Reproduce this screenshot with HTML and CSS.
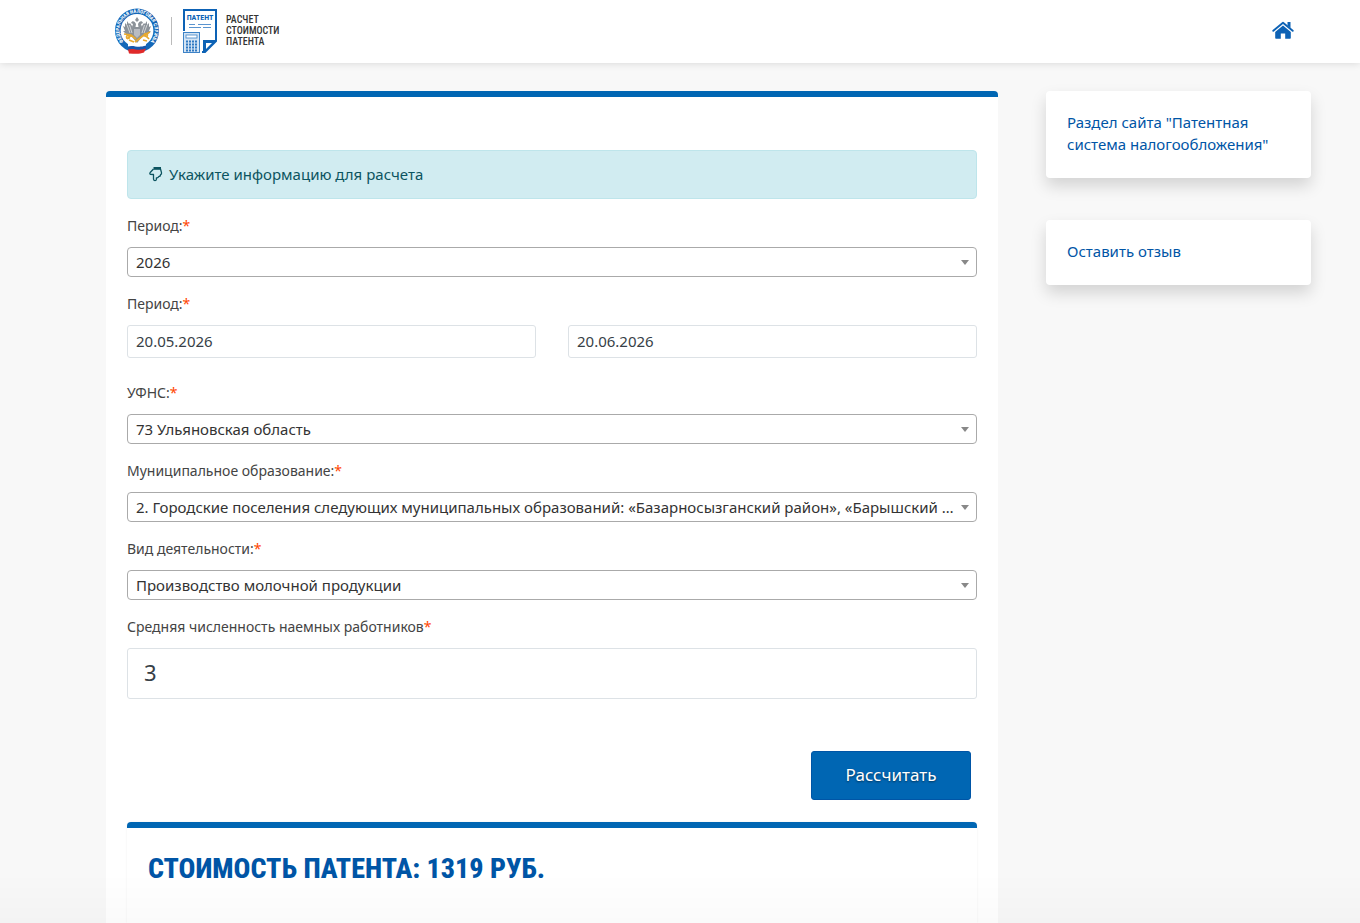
FILE: index.html
```
<!DOCTYPE html>
<html lang="ru">
  <head>
    <meta charset="UTF-8" />
    <meta name="viewport" content="width=device-width, initial-scale=1.0" />
    <title>Расчет стоимости патента</title>
    <link rel="stylesheet" href="styles.css">
  </head>
  <body>
    <header class="header">
      <a class="logo" href="#">
        <svg class="emblem" viewBox="0 0 46 48" width="46" height="48" aria-hidden="true">
          <defs>
            <path id="ring" d="M12.700 37.700 A17.600 17.600 0 1 1 33.300 37.700" />
          </defs>
          <circle cx="23" cy="23.5" r="22" fill="#1467b8" />
          <circle cx="23" cy="23.5" r="16.400" fill="#fff" />
          <text class="emblem-text"><textPath href="#ring" startOffset="50%" text-anchor="middle">ФЕДЕРАЛЬНАЯ НАЛОГОВАЯ СЛУЖБА</textPath></text>
          <!-- орел -->
          <g fill="#8c9299">
            <path d="M21 13l2-3 2 3-2 2z" />
            <path d="M22 17c-1-3-4-4-5-1l2 1-1 3 3 3zM24 17c1-3 4-4 5-1l-2 1 1 3-3 3z" />
            <path d="M20 22l-4-6-1 1-2-3 0 4-2-2 0 4-2-1 2 5-2 0 3 3 6 3 3-1zM26 22l4-6 1 1 2-3 0 4 2-2 0 4 2-1-2 5 2 0-3 3-6 3-3-1z" />
            <path d="M19 20h8l1 10-5 6-5-6z" />
          </g>
          <g fill="none" stroke="#fff" stroke-width="0.6">
            <path d="M13 18l3 8M15.500 18l2.500 8M33 18l-3 8M30.500 18l-2.500 8" />
          </g>
          <path d="M20 22h6v6l-3 3-3-3z" fill="#b9bcc2" />
          <g fill="none" stroke="#e8a92f" stroke-width="1.700">
            <path d="M10 27l7 1 5 4M17 28l-4 4M36 25l-6 3-9 7M30 27l5 5M15 33l5 2M29 33l4 1" />
            <circle cx="14" cy="30" r="1.500" />
            <circle cx="32" cy="28" r="1.500" />
          </g>
          <!-- лента -->
          <path d="M14 37c6-2 9 2 18-1v3c-9 3-12-1-18 1z" fill="#fff" />
          <path d="M14 39.500c6-2 9 2 18-1v3.500c-9 3-12-1-18 1z" fill="#1757ac" />
          <path d="M14 42.500c6-2 9 2 18-1l-2 4c-5 2-10 1-15 1z" fill="#e02a2a" />
        </svg>
        <span class="logo-line"></span>
        <svg class="patent" viewBox="0 0 34 44" width="34" height="44" aria-hidden="true">
          <path d="M1 22V1h32v31L22 43h-3" fill="none" stroke="#0d62b5" stroke-width="2" />
          <path d="M20 44V31h14L21 44z" fill="#0d62b5" />
          <path d="M23 40v-6h6z" fill="#fff" />
          <text class="patent-text" x="17" y="11" text-anchor="middle">ПАТЕНТ</text>
          <path d="M6 15.500h6M15 15.500h13M6 18.500h12M20 18.500h8" stroke="#5a94cf" stroke-width="1.200" />
          <rect x="0.500" y="23.500" width="16" height="20" fill="#d4e4f4" stroke="#3e83c7" />
          <rect x="3" y="26" width="11" height="3" fill="#fff" stroke="#3e83c7" stroke-width="0.800" />
          <path d="M3 32.500h11M3 35.500h11M3 38.500h11M3 41.500h11" stroke="#2f79c2" stroke-width="1.800" stroke-dasharray="2 1" />
        </svg>
        <span class="logo-text">РАСЧЕТ<br>СТОИМОСТИ<br>ПАТЕНТА</span>
      </a>
      <a class="home" href="#" aria-label="На главную">
        <svg viewBox="0 0 22 18" width="22" height="18" aria-hidden="true">
          <path d="M11 4.500L3.200 11v6q0 .8.800.8h4.800V12.500h4.400v5.300H18q.8 0 .8-.8v-6z" fill="#0d62b5" />
          <path d="M1.300 9.800L11 1.800l9.700 8" fill="none" stroke="#0d62b5" stroke-width="1.900" stroke-linecap="round" stroke-linejoin="round" />
          <path d="M15.500 1h3v6l-3-2.500z" fill="#0d62b5" />
        </svg>
      </a>
    </header>

    <div class="page">
      <main class="panel">
        <div class="alert">
          <svg viewBox="0 0 14 16" width="14" height="16" aria-hidden="true">
            <path d="M4.500 3L1.200 6.500q-.9 1.300.3 1.800l3 .2v4.700q.2 1.500 1.500 1.500t1.400-1.500v-1.400q1.900.3 2.200-1.200 1.900-.1 2-2 1.300-.5.900-2L11.500 3" fill="none" stroke="#0c5460" stroke-width="1.300" stroke-linejoin="round" />
            <path d="M4.500 1h7.500v2.800H4.500z" fill="#0c5460" />
          </svg>
          <span>Укажите информацию для расчета</span>
        </div>

        <form class="form">
          <div class="field">
            <label for="year">Период:<span class="req">*</span></label>
            <div class="select">
              <select id="year">
                <option>2026</option>
              </select>
            </div>
          </div>

          <div class="field field-dates">
            <label for="date-from">Период:<span class="req">*</span></label>
            <div class="dates">
              <input type="text" id="date-from" value="20.05.2026">
              <input type="text" id="date-to" value="20.06.2026" aria-label="Конец периода">
            </div>
          </div>

          <div class="field">
            <label for="ufns">УФНС:<span class="req">*</span></label>
            <div class="select">
              <select id="ufns">
                <option>73 Ульяновская область</option>
              </select>
            </div>
          </div>

          <div class="field">
            <label for="area">Муниципальное образование:<span class="req">*</span></label>
            <div class="select">
              <select id="area">
                <option>2. Городские поселения следующих муниципальных образований: «Базарносызганский район», «Барышский район»</option>
              </select>
            </div>
          </div>

          <div class="field">
            <label for="activity">Вид деятельности:<span class="req">*</span></label>
            <div class="select">
              <select id="activity">
                <option>Производство молочной продукции</option>
              </select>
            </div>
          </div>

          <div class="field">
            <label for="workers">Средняя численность наемных работников<span class="req">*</span></label>
            <input type="text" id="workers" class="input-lg" value="3">
          </div>

          <div class="actions">
            <button type="button" class="btn">Рассчитать</button>
          </div>
        </form>

        <section class="result">
          <h2>СТОИМОСТЬ ПАТЕНТА: 1319 РУБ.</h2>
        </section>
      </main>

      <aside class="sidebar">
        <div class="card">
          <a href="#">Раздел сайта "Патентная система налогообложения"</a>
        </div>
        <div class="card">
          <a href="#">Оставить отзыв</a>
        </div>
      </aside>
    </div>
  </body>
</html>
```
FILE: styles.css
```
* {
  box-sizing: border-box;
}

body {
  margin: 0;
  min-height: 100vh;
  display: flex;
  flex-direction: column;
  background-color: #f8f8f8;
  font-family: "Noto Sans", "Open Sans", sans-serif;
  font-size: 15px;
  color: #333;
}

/* затемнение у нижнего края окна */
body::after {
  content: "";
  position: fixed;
  left: 0;
  right: 0;
  bottom: 0;
  height: 50px;
  background: linear-gradient(rgba(0, 0, 0, 0), rgba(0, 0, 0, 0.02));
  pointer-events: none;
}

a {
  color: #0055a6;
  text-decoration: none;
}

.header {
  display: flex;
  align-items: center;
  justify-content: space-between;
  height: 63px;
  padding: 0 66px 2px 114px;
  background-color: #fff;
  box-shadow: 0 0 8px rgba(0, 0, 0, 0.15);
}

.logo {
  display: flex;
  align-items: center;
}

.emblem-text {
  font-family: "Roboto Condensed", "Roboto", sans-serif;
  font-size: 5px;
  font-weight: bold;
  fill: #fff;
}

.logo-line {
  width: 1px;
  height: 28px;
  margin: 0 11px;
  background-color: #bbb;
}

.patent-text {
  font-family: "Roboto Condensed", "Roboto", sans-serif;
  font-size: 8px;
  font-weight: bold;
  fill: #0d62b5;
}

.logo-text {
  margin-left: 9px;
  font-family: "Roboto Condensed", "Roboto", sans-serif;
  font-size: 10px;
  font-weight: 500;
  line-height: 11px;
  color: #333;
}

.home {
  display: flex;
  padding-bottom: 2px;
}

.page {
  flex: 1;
  display: grid;
  grid-template-columns: minmax(0, 1fr) 265px;
  gap: 48px;
  padding: 28px 49px 0 106px;
}

.panel {
  display: flex;
  flex-direction: column;
  padding: 53px 21px 0;
  background-color: #fff;
  border-top: 6px solid #0066b3;
  border-radius: 4px 4px 0 0;
}

.alert {
  display: flex;
  align-items: center;
  gap: 6px;
  height: 49px;
  margin-bottom: 18px;
  padding: 0 21px 2px;
  background-color: #d1ecf1;
  border: 1px solid #bee5eb;
  border-radius: 4px;
  color: #0c5460;
}

.field {
  margin-bottom: 18px;
}

.field-dates {
  margin-bottom: 26px;
}

.field label {
  display: block;
  margin-bottom: 12px;
  font-size: 14px;
  line-height: 18px;
  color: #444;
}

.req {
  color: #ff4500;
}

.select {
  position: relative;
}

.select::after {
  content: "";
  position: absolute;
  top: 13px;
  right: 8px;
  border: 4px solid transparent;
  border-top: 5px solid #888;
  border-bottom: 0;
  pointer-events: none;
}

select,
input {
  display: block;
  width: 100%;
  font-family: inherit;
  font-size: 15px;
  background-color: #fff;
}

select {
  height: 30px;
  padding: 0 18px 1px 8px;
  appearance: none;
  border: 1px solid #aaa;
  border-radius: 4px;
  color: #333;
  text-overflow: ellipsis;
  white-space: nowrap;
  overflow: hidden;
}

input {
  height: 33px;
  padding: 0 8px 2px;
  border: 1px solid #dde2e6;
  border-radius: 3px;
  color: #373f47;
}

.dates {
  display: grid;
  grid-template-columns: 1fr 1fr;
  gap: 32px;
}

.input-lg {
  height: 51px;
  padding: 0 16px 3px;
  font-size: 22px;
}

.actions {
  display: flex;
  justify-content: flex-end;
  margin: 52px 6px 22px 0;
}

.btn {
  width: 160px;
  height: 49px;
  padding: 0 0 2px;
  border: 1px solid #0055a6;
  border-radius: 3px;
  background-color: #0066b3;
  font-family: inherit;
  font-size: 17px;
  color: #fff;
  text-shadow: 0 1px 2px rgba(0, 0, 0, 0.5);
}

.field:nth-last-child(2) {
  margin-bottom: 0;
}

.result {
  flex: 1;
  padding: 20px 21px;
  border-top: 6px solid #0066b3;
  border-radius: 4px 4px 0 0;
  box-shadow: 0 0 2px rgba(0, 0, 0, 0.08);
}

.result h2 {
  margin: 0;
  font-family: "Roboto Condensed", "Roboto", sans-serif;
  font-size: 28px;
  font-weight: 800;
  line-height: 42px;
  color: #0055a6;
}

.sidebar {
  display: flex;
  flex-direction: column;
  gap: 42px;
}

.card {
  padding: 20px 21px 23px;
  background-color: #fff;
  border-radius: 4px;
  box-shadow: 0 8px 16px rgba(0, 0, 0, 0.15);
  line-height: 22px;
}
```
